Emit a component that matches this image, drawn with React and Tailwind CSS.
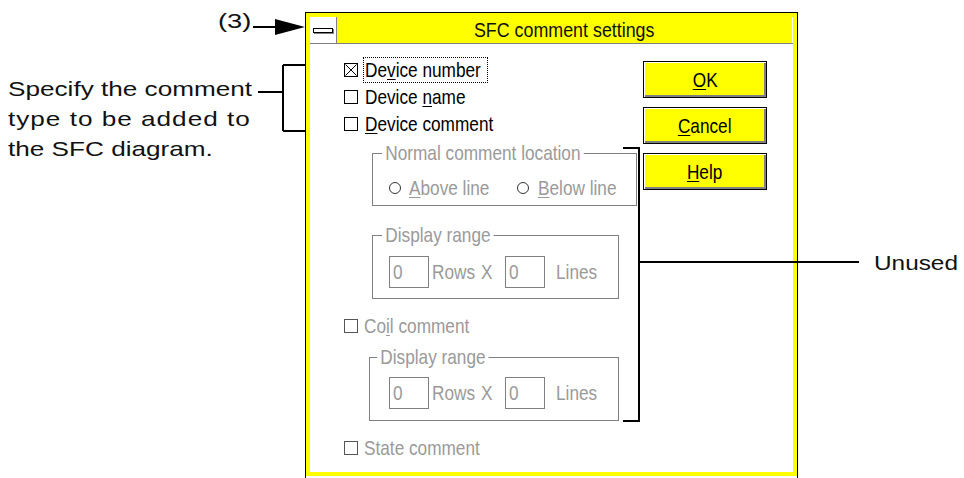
import React from 'react';

const sans = "font-['Liberation_Sans',Arial,sans-serif]";

const GRAY = 'text-[#9a9a9a]';

// dialog font is a narrow Arial; squeeze Liberation Sans to fit
function N({ children, className = '' }) {
  return (
    <span className={`inline-block origin-left scale-x-[0.82] whitespace-nowrap ${className}`}>{children}</span>
  );
}

function U({ children }) {
  return <span className="underline decoration-1 underline-offset-[2px]">{children}</span>;
}

function Check({ checked, dim }) {
  return (
    <span className={`w-[14px] h-[14px] border ${dim ? 'border-[#555]' : 'border-black'} bg-white flex items-center justify-center shrink-0`}>
      {checked && (
        <svg width="12" height="12" viewBox="0 0 12 12">
          <path d="M0.5 0.5L11.5 11.5M11.5 0.5L0.5 11.5" stroke="black" strokeWidth="1" />
        </svg>
      )}
    </span>
  );
}

function Radio() {
  return <span className="w-[12px] h-[12px] rounded-full border border-[#333] bg-white shrink-0" />;
}

function Field() {
  return (
    <div className={`w-[40px] h-[32px] shrink-0 border border-[#808080] pl-[3px] flex items-center ${GRAY}`}>
      <N>0</N>
    </div>
  );
}

function RangeRow() {
  return (
    <div className={`flex items-center ${GRAY}`}>
      <Field />
      <span className="w-[52px] shrink-0 pl-[3px]"><N>Rows</N></span>
      <span className="w-[24px] shrink-0"><N>X</N></span>
      <Field />
      <span className="ml-[11px]"><N>Lines</N></span>
    </div>
  );
}

function Group({ label, labelLeft = 'left-[9px]', className, children }) {
  return (
    <div className={`relative border border-[#808080] ${className}`}>
      <span className={`absolute ${labelLeft} top-[-12px] bg-white px-[4px] leading-[22px] whitespace-nowrap origin-left scale-x-[0.82] ${GRAY}`}>
        {label}
      </span>
      {children}
    </div>
  );
}

function Btn({ u, rest }) {
  return (
    <div className="h-[37px] border border-black bg-[#ffff00] shadow-[inset_1px_1px_0_#fff,inset_-2px_-2px_0_#808080] flex items-center justify-center text-black">
      <span className="inline-block scale-x-[0.82]"><U>{u}</U>{rest}</span>
    </div>
  );
}

export default function App() {
  return (
    <div className="relative w-[964px] h-[478px] bg-white overflow-hidden pt-[12px]">
      {/* dialog */}
      <div className={`ml-[305px] w-[493px] h-[466px] border-l border-r border-t border-black ${sans} text-[21px] leading-[22px]`}>
        <div className="h-[463px] border-4 border-[#ffff00] flex flex-col">
          <div className="h-[27px] flex border-b border-[#808080] shrink-0">
            <div className="w-[27px] border-r border-[#808080] bg-white flex items-center justify-center">
              <span className="w-[20px] h-[5px] border border-black bg-white shadow-[1px_1px_0_#808080]" />
            </div>
            <div className="flex-1 bg-[#ffff00] border-r border-white flex items-center justify-center text-[#111]">
              <span className="inline-block scale-x-[0.85] whitespace-nowrap">SFC comment settings</span>
            </div>
          </div>

          <div className="flex-1 flex bg-white">
            {/* left column */}
            <div className="w-[333px] pl-[34px] pt-[12px] flex flex-col">
              <div className="h-[27px] flex items-center">
                <Check checked />
                <span className="ml-[5px] w-[125px] h-[26px] flex items-center border border-dotted border-black pl-[1px]">
                  <N>De<U>v</U>ice number</N>
                </span>
              </div>
              <div className="h-[27px] flex items-center">
                <Check />
                <span className="ml-[7px]"><N>Device <U>n</U>ame</N></span>
              </div>
              <div className="h-[27px] flex items-center">
                <Check />
                <span className="ml-[7px]"><N><U>D</U>evice comment</N></span>
              </div>

              <Group label="Normal comment location" className="ml-[28px] mt-[16px] w-[265px] pt-[24px] pb-[7px] pl-[16px]">
                <div className={`h-[20px] flex items-center ${GRAY}`}>
                  <div className="w-[128px] shrink-0 flex items-center">
                    <Radio />
                    <span className="ml-[8px]"><N><U>A</U>bove line</N></span>
                  </div>
                  <Radio />
                  <span className="ml-[9px]"><N><U>B</U>elow line</N></span>
                </div>
              </Group>

              <Group label="Display range" className="ml-[28px] mt-[29px] w-[247px] pt-[20px] pb-[10px] pl-[16px]">
                <RangeRow />
              </Group>

              <div className={`mt-[13px] h-[27px] flex items-center ${GRAY}`}>
                <Check dim />
                <span className="ml-[6px]"><N>Co<U>i</U>l comment</N></span>
              </div>

              <Group label="Display range" labelLeft="left-[7px]" className="ml-[25px] mt-[18px] w-[250px] pt-[19px] pb-[11px] pl-[19px]">
                <RangeRow />
              </Group>

              <div className={`mt-[13px] h-[27px] flex items-center ${GRAY}`}>
                <Check dim />
                <span className="ml-[6px]"><N>State comment</N></span>
              </div>
            </div>

            {/* buttons */}
            <div className="w-[124px] pt-[17px] flex flex-col gap-[9px]">
              <Btn u="O" rest="K" />
              <Btn u="C" rest="ancel" />
              <Btn u="H" rest="elp" />
            </div>
          </div>
        </div>
      </div>

      {/* callout lines */}
      <svg className="absolute inset-0 pointer-events-none" width="964" height="478" viewBox="0 0 964 478">
        <g stroke="black" strokeWidth="2" fill="none">
          <path d="M253 27H280" />
          <path d="M258 92H283M283 65V131M283 65H305M283 131H305" />
          <path d="M623 148H639V421H623" />
          <path d="M639 262H859" />
        </g>
        <polygon points="275,19 305,27 275,35" fill="black" />
      </svg>

      {/* callout texts */}
      <div className={`absolute left-[218px] top-[6px] ${sans} text-[21px] leading-[30px] text-[#111] origin-left scale-x-[1.3]`}>
        (3)
      </div>
      <div className={`absolute left-[8px] top-[74px] w-[196px] ${sans} text-[21px] leading-[30px] text-[#111] origin-left scale-x-[1.245] whitespace-nowrap`}>
        <div>Specify the comment</div>
        <div className="tracking-[0.8px]">type to be added to</div>
        <div>the SFC diagram.</div>
      </div>
      <div className={`absolute left-[874px] top-[248px] ${sans} text-[21px] leading-[30px] text-[#111] origin-left scale-x-[1.16]`}>
        Unused
      </div>
    </div>
  );
}
